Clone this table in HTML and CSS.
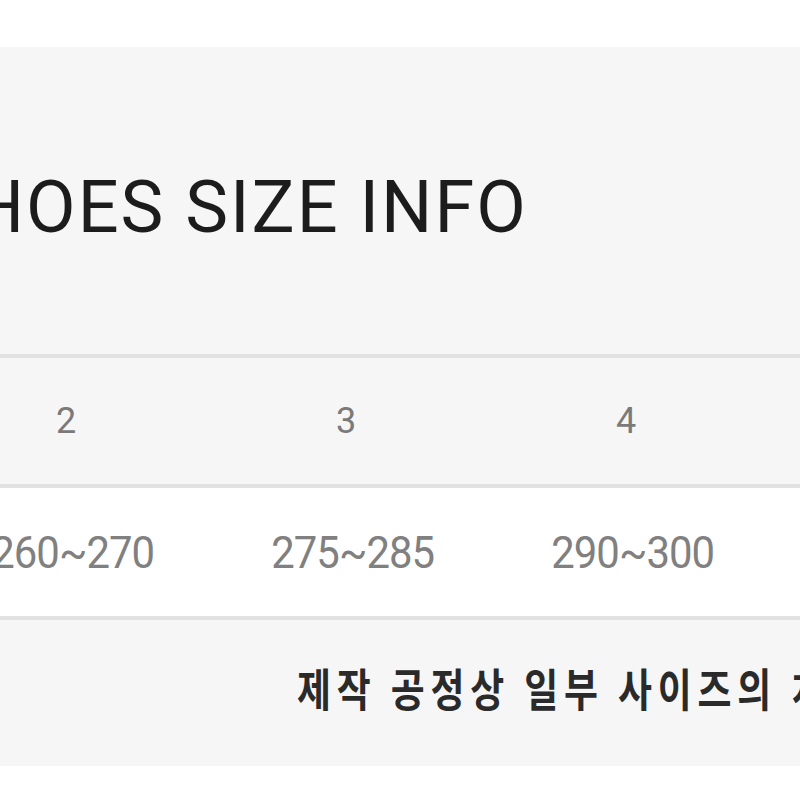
FILE: index.html
```html
<!DOCTYPE html>
<html lang="ko">
<head>
<meta charset="utf-8">
<title>SHOES SIZE INFO</title>
<link rel="stylesheet" href="styles.css">
</head>
<body>
<div class="page">
  <div class="sheet">
    <section class="title-block">
      <h1 class="title">SHOES SIZE INFO</h1>
    </section>
    <div class="row row-head">
      <div class="cell"><span class="num">1</span></div>
      <div class="cell"><span class="num">2</span></div>
      <div class="cell"><span class="num">3</span></div>
      <div class="cell"><span class="num">4</span></div>
      <div class="cell"><span class="num">5</span></div>
    </div>
    <div class="row row-data">
      <div class="cell"><span class="range">245~255</span></div>
      <div class="cell"><span class="range">260~270</span></div>
      <div class="cell"><span class="range">275~285</span></div>
      <div class="cell"><span class="range">290~300</span></div>
      <div class="cell"><span class="range">305~315</span></div>
    </div>
    <div class="row row-note">
      <p class="note">제작 공정상 일부 사이즈의 치수 오차가 있을 수 있습니다.</p>
    </div>
  </div>
</div>
</body>
</html>
```
FILE: styles.css
```css
html, body {
  margin: 0;
  padding: 0;
  background: #ffffff;
  overflow: hidden;
}

.page {
  width: 800px;
  height: 800px;
  overflow: hidden;
  padding-top: 47px;
  box-sizing: border-box;
}

.sheet {
  width: 1400px;
  margin-left: -354px;
}

.title-block {
  background: #f6f6f6;
  padding: 125px 0 110px 282px;
}

.title {
  margin: 0;
  font-family: Roboto, "Liberation Sans", sans-serif;
  font-weight: 400;
  font-size: 72px;
  line-height: 72px;
  letter-spacing: 2px;
  color: #1c1c1c;
  white-space: nowrap;
}

.row {
  display: flex;
  border-top: 4px solid #e2e2e2;
}

.row-head {
  background: #f6f6f6;
  height: 126px;
}

.row-data {
  background: #ffffff;
  height: 128px;
}

.cell {
  flex: 0 0 280px;
  display: flex;
  align-items: center;
  justify-content: center;
}

.num {
  font-family: Roboto, "Liberation Sans", sans-serif;
  font-size: 36px;
  line-height: 36px;
  color: #7a7a7a;
}

.range {
  display: inline-block;
  font-family: Roboto, "Liberation Sans", sans-serif;
  font-size: 45px;
  line-height: 45px;
  color: #808080;
  transform: scaleX(0.93);
  margin-left: 13px;
  letter-spacing: -1px;
}

.row-note {
  background: #f6f6f6;
  height: 150px;
  align-items: center;
  padding-left: 651px;
  padding-bottom: 10px;
  box-sizing: border-box;
}

.note {
  margin: 0;
  font-family: "Noto Sans CJK KR", sans-serif;
  font-weight: 700;
  font-size: 45px;
  line-height: 50px;
  letter-spacing: 7px;
  word-spacing: -2px;
  color: #2a2a2a;
  white-space: nowrap;
  transform: scaleX(0.82);
  transform-origin: left center;
}
```
